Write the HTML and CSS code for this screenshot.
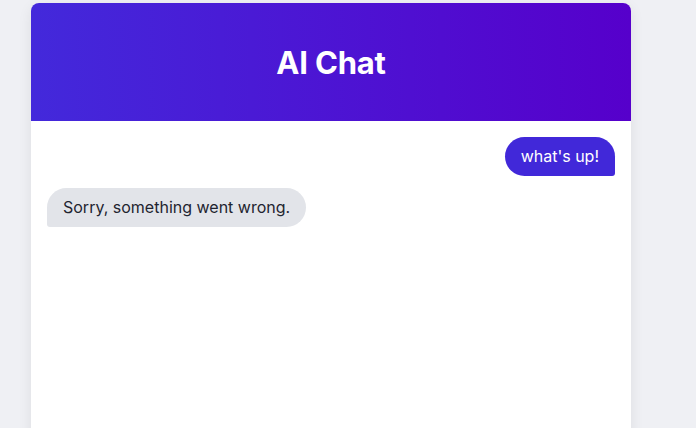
FILE: index.html
```html
<!DOCTYPE html>
<html lang="en">
<head>
<meta charset="utf-8">
<title>AI Chat</title>
<link rel="stylesheet" href="styles.css">
</head>
<body>
<div class="card">
  <header class="header"><h1>AI Chat</h1></header>
  <div class="messages">
    <div class="msg user">what's up!</div>
    <div class="msg bot">Sorry, something went wrong.</div>
  </div>
</div>
</body>
</html>
```
FILE: styles.css
```css
* { box-sizing: border-box; }
html, body { margin: 0; padding: 0; }
body {
  background: #eff0f4;
  font-family: Inter, "Noto Sans", sans-serif;
  padding: 3px 0 0 31px;
  overflow: hidden;
  height: 428px;
}
.card {
  width: 600px;
  height: 560px;
  background: #fff;
  border-radius: 8px;
  overflow: hidden;
  box-shadow: 0 4px 14px rgba(0, 0, 0, 0.08);
}
.header {
  height: 118px;
  display: flex;
  align-items: center;
  justify-content: center;
  background: linear-gradient(to right, #4329db, #5600cb);
}
.header h1 {
  margin: 0;
  color: #fff;
  font-size: 31px;
  font-weight: 700;
  letter-spacing: -0.2px;
}
.messages {
  display: flex;
  flex-direction: column;
  gap: 12px;
  padding: 16px;
}
.msg {
  font-size: 16px;
  line-height: 23px;
  padding: 8px 16px;
  max-width: 70%;
}
.user {
  align-self: flex-end;
  background: #4128d9;
  color: #fff;
  border-radius: 20px 20px 3px 20px;
}
.bot {
  align-self: flex-start;
  background: #e2e4e9;
  color: #1f2430;
  border-radius: 20px 20px 20px 3px;
}
```
